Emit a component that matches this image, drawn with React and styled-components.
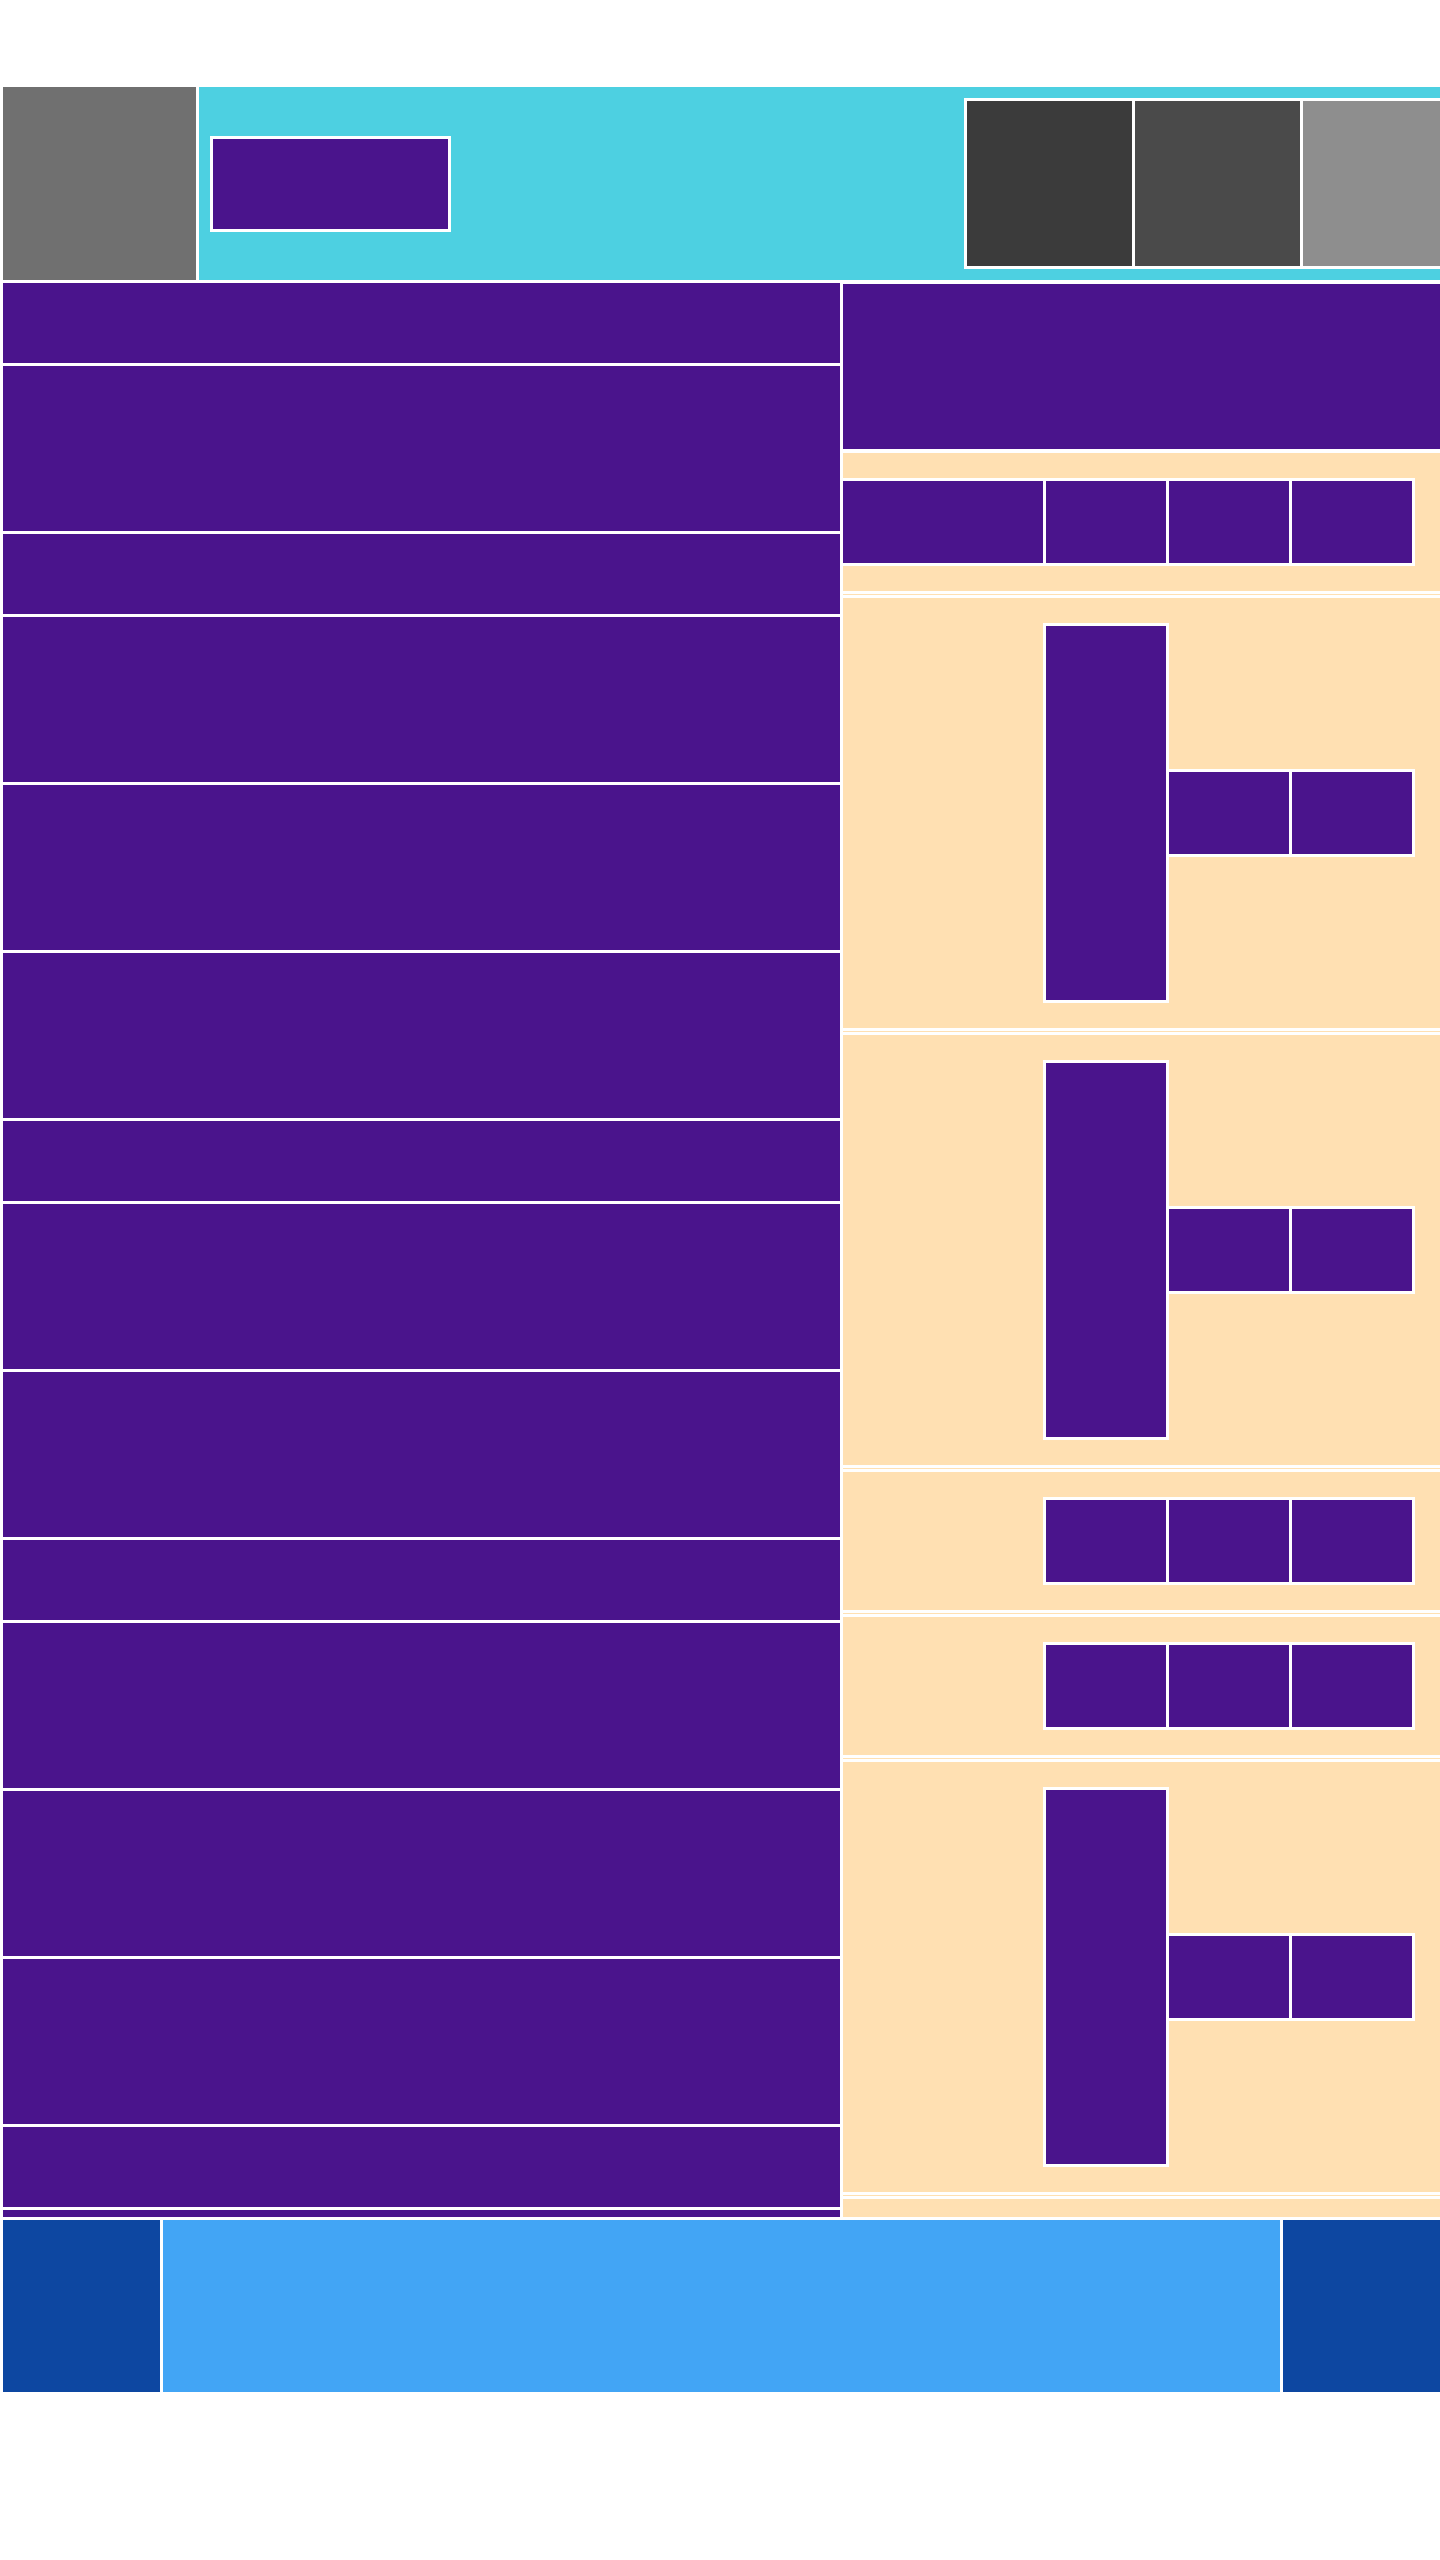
import React from "react";
import styled, { createGlobalStyle } from "styled-components";

// Palette
const PURPLE = "#4a148c";
const CYAN = "#4dd0e1";
const PEACH = "#ffe0b2";
const NAVY = "#0d47a1";
const SKY = "#42a5f5";

const GlobalStyle = createGlobalStyle`
    html, body {
        margin: 0;
        padding: 0;
        background: #fff;
        overflow-x: hidden;
        font-family: "Liberation Sans", Arial, sans-serif;
    }
`;

const Page = styled.div`
    width: 1440px;
    box-sizing: border-box;
    padding: 87px 0 0 3px;
    display: flex;
    flex-direction: column;
    gap: 3px;
`;

// Header
const Header = styled.header`
    display: flex;
    gap: 3px;
    height: 193px;
`;

const Logo = styled.div`
    width: 193px;
    height: 193px;
    flex-shrink: 0;
    background: #707070;
`;

const TopBar = styled.div`
    width: 1283px;
    flex-shrink: 0;
    box-sizing: border-box;
    padding: 0 11px;
    display: flex;
    align-items: center;
    justify-content: space-between;
    background: ${CYAN};
`;

const Frame = styled.div`
    display: flex;
    align-items: center;
    gap: 3px;
    padding: ${(p) => p.pad || "3px"};
    margin-left: ${(p) => p.offset || 0}px;
    background: #fff;
    flex-shrink: 0;
`;

const Block = styled.div`
    width: ${(p) => p.w}px;
    height: ${(p) => p.h}px;
    flex-shrink: 0;
    background: ${(p) => p.color || PURPLE};
`;

// Main
const Main = styled.main`
    display: flex;
    gap: 3px;
    height: 1934px;
    overflow: hidden;
`;

const Feed = styled.div`
    width: 837px;
    flex-shrink: 0;
    display: flex;
    flex-direction: column;
    gap: 3px;
`;

const FeedRow = styled.div`
    height: ${(p) => (p.tall ? 165 : 80)}px;
    flex-shrink: 0;
    background: ${PURPLE};
`;

const Side = styled.aside`
    flex: 1;
    display: flex;
    flex-direction: column;
    padding-top: 1px;
`;

const SideBanner = styled.div`
    height: 165px;
    flex-shrink: 0;
    margin-bottom: 4px;
    background: ${PURPLE};
`;

const Section = styled.section`
    height: ${(p) => p.h}px;
    flex-shrink: 0;
    display: flex;
    align-items: center;
    background: ${PEACH};
`;

const Divider = styled.div`
    height: 1px;
    margin: 3px 0;
    flex-shrink: 0;
    background: ${PEACH};
`;

// Footer
const Footer = styled.footer`
    display: flex;
    gap: 3px;
    height: 172px;
`;

const FooterEnd = styled.div`
    width: 157px;
    flex-shrink: 0;
    background: ${NAVY};
`;

const FooterMid = styled.div`
    flex: 1;
    background: ${SKY};
`;

const feedRows = [0, 1, 0, 1, 1, 1, 0, 1, 1, 0, 1, 1, 1, 0, 0];

const TallSection = () => (
    <Section h={430}>
        <Frame offset={200}>
            <Block w={120} h={374} />
        </Frame>
        <Frame pad="3px 3px 3px 0">
            <Block w={120} h={82} />
            <Block w={120} h={82} />
        </Frame>
    </Section>
);

const TrioSection = () => (
    <Section h={138}>
        <Frame offset={200}>
            <Block w={120} h={82} />
            <Block w={120} h={82} />
            <Block w={120} h={82} />
        </Frame>
    </Section>
);

export default function App() {
    return (
        <>
            <GlobalStyle />
            <Page>
                <Header>
                    <Logo />
                    <TopBar>
                        <Frame>
                            <Block w={235} h={90} />
                        </Frame>
                        <Frame>
                            <Block w={165} h={165} color="#3b3b3b" />
                            <Block w={165} h={165} color="#4a4a4a" />
                            <Block w={165} h={165} color="#8e8e8e" />
                        </Frame>
                    </TopBar>
                </Header>

                <Main>
                    <Feed>
                        {feedRows.map((tall, i) => (
                            <FeedRow key={i} tall={tall} />
                        ))}
                    </Feed>

                    <Side>
                        <SideBanner />
                        <Section h={138}>
                            <Frame offset={-3}>
                                <Block w={200} h={82} />
                                <Block w={120} h={82} />
                                <Block w={120} h={82} />
                                <Block w={120} h={82} />
                            </Frame>
                        </Section>
                        <Divider />
                        <TallSection />
                        <Divider />
                        <TallSection />
                        <Divider />
                        <TrioSection />
                        <Divider />
                        <TrioSection />
                        <Divider />
                        <TallSection />
                        <Divider />
                        <Section h={138} />
                    </Side>
                </Main>

                <Footer>
                    <FooterEnd />
                    <FooterMid />
                    <FooterEnd />
                </Footer>
            </Page>
        </>
    );
}
